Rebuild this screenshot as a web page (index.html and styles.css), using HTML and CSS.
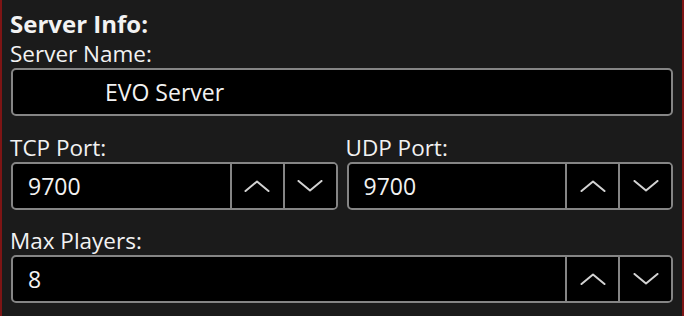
FILE: index.html
```html
<!DOCTYPE html>
<html>
<head>
<meta charset="utf-8">
<link rel="stylesheet" href="styles.css">
</head>
<body>
<div class="panel">
  <div class="title">Server Info:</div>
  <div class="field">
    <div class="label">Server Name:</div>
    <div class="box name-box"><span class="value name-value">EVO Server</span></div>
  </div>
  <div class="row field gap1">
    <div class="col">
      <div class="label">TCP Port:</div>
      <div class="box spin">
        <span class="value">9700</span>
        <button class="btn"><svg width="26" height="12" viewBox="0 0 26 12"><polyline points="1.5,11 13,1.5 24.5,11" /></svg></button>
        <button class="btn"><svg width="26" height="12" viewBox="0 0 26 12"><polyline points="1.5,1 13,10.5 24.5,1" /></svg></button>
      </div>
    </div>
    <div class="col">
      <div class="label">UDP Port:</div>
      <div class="box spin">
        <span class="value">9700</span>
        <button class="btn"><svg width="26" height="12" viewBox="0 0 26 12"><polyline points="1.5,11 13,1.5 24.5,11" /></svg></button>
        <button class="btn"><svg width="26" height="12" viewBox="0 0 26 12"><polyline points="1.5,1 13,10.5 24.5,1" /></svg></button>
      </div>
    </div>
  </div>
  <div class="field gap2">
    <div class="label">Max Players:</div>
    <div class="box spin">
      <span class="value">8</span>
      <button class="btn"><svg width="26" height="12" viewBox="0 0 26 12"><polyline points="1.5,11 13,1.5 24.5,11" /></svg></button>
      <button class="btn"><svg width="26" height="12" viewBox="0 0 26 12"><polyline points="1.5,1 13,10.5 24.5,1" /></svg></button>
    </div>
  </div>
</div>
</body>
</html>
```

FILE: styles.css
```css
* { box-sizing: border-box; }
html, body {
  margin: 0;
  padding: 0;
  background: #1b1b1b;
}
body {
  width: 684px;
  height: 316px;
  overflow: hidden;
  font-family: "Open Sans", "Noto Sans", sans-serif;
  color: #f2f2f2;
}
.panel {
  height: 316px;
  border-left: 2px solid #7e1515;
  border-right: 2px solid #7e1515;
  padding: 9px 9px 0 9px;
  display: flex;
  flex-direction: column;
}
.title {
  font-size: 24px;
  font-weight: 700;
  line-height: 30px;
  margin-bottom: 1px;
  margin-left: -1px;
}
.label {
  font-size: 22.5px;
  line-height: 28px;
  white-space: nowrap;
  margin-left: -1px;
}
.gap1 { margin-top: 18px; }
.gap2 { margin-top: 17px; }
.row {
  display: grid;
  grid-template-columns: 1fr 1fr;
  column-gap: 9px;
}
.box {
  height: 48px;
  background: #000;
  border: 2px solid #858585;
  border-radius: 5px;
  display: flex;
  align-items: stretch;
  overflow: hidden;
}
.value {
  flex: 1;
  display: flex;
  align-items: center;
  padding-left: 15px;
  font-size: 23px;
  line-height: 1;
}
.name-value {
  padding-left: 92px;
}
.btn {
  width: 53px;
  flex: none;
  background: #000;
  border: none;
  border-left: 2px solid #858585;
  padding: 0;
  margin: 0;
  display: flex;
  align-items: center;
  justify-content: center;
}
.btn svg polyline {
  fill: none;
  stroke: #d2d2d2;
  stroke-width: 2;
  stroke-linecap: round;
  stroke-linejoin: round;
}
```
